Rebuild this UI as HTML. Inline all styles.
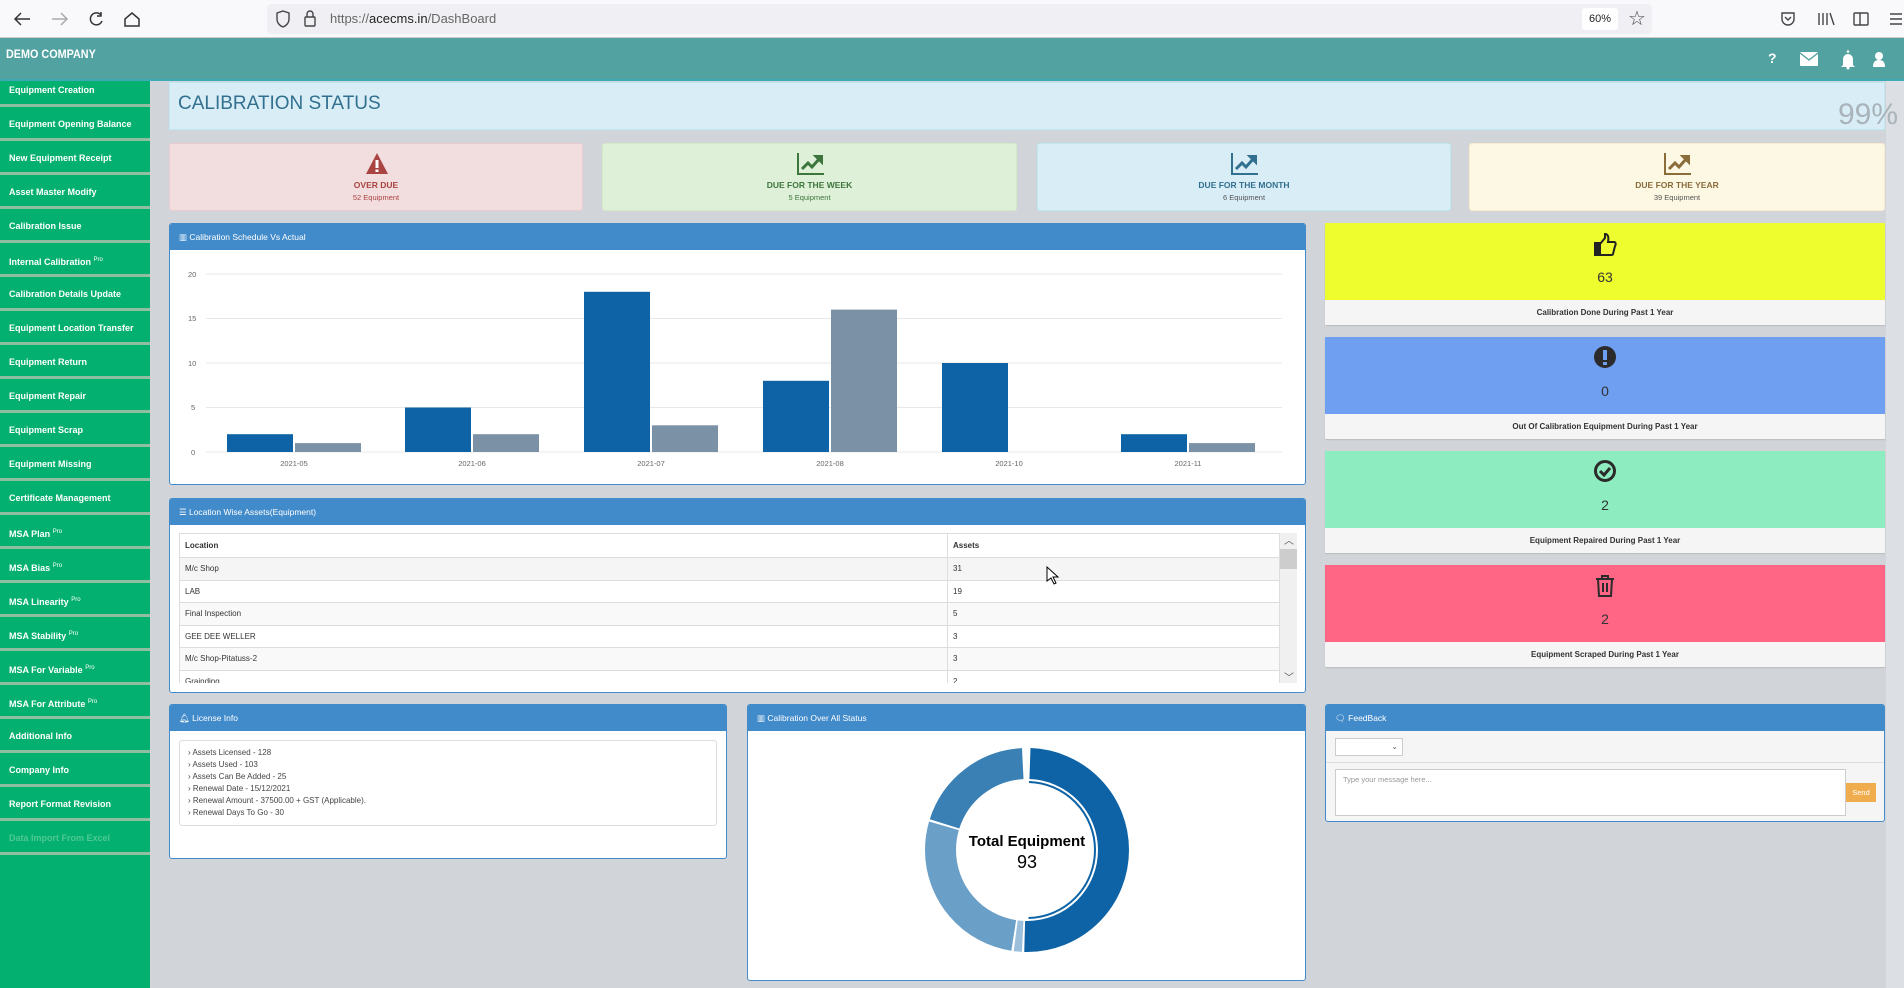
<!DOCTYPE html>
<html><head><meta charset="utf-8">
<style>
*{box-sizing:border-box;margin:0;padding:0}
body{width:1904px;height:988px;overflow:hidden;background:#d1d5da;font-family:"Liberation Sans",sans-serif;position:relative}
.a{position:absolute}
.tb{left:0;top:0;width:1904px;height:38px;background:#f9f9fb;border-bottom:1px solid #ccc}
.url{left:267px;top:4px;width:1385px;height:30px;background:#f0f0f4;border-radius:4px}
.hdr{left:0;top:38px;width:1904px;height:43px;background:#52a2a2;border-bottom:2px solid #3fa9b5}
.side{left:0;top:81px;width:150px;height:907px;background:#04b06f}
.si{position:absolute;left:0;width:150px;height:34px;border-bottom:3px solid #8fbfa0;color:#fff;font-size:9px;font-weight:bold;padding-left:9px;padding-top:4px;line-height:27px;white-space:nowrap}
.si sup{font-size:6px;font-weight:normal}
.box{position:absolute;top:143px;height:68px;border:1px solid;border-radius:3px;text-align:center}
.box .t{position:absolute;top:36px;width:100%;font-size:8.5px;font-weight:bold}
.box .s{position:absolute;top:49px;width:100%;font-size:7.5px}
.pan{position:absolute;background:#fff;border:1px solid #428bca;border-radius:3px;overflow:hidden}
.ph{height:26px;background:#428bca;color:#fff;font-size:8.5px;line-height:26px;padding-left:9px}
.card{position:absolute;left:1325px;width:560px;height:102px;background:#f5f5f5;box-shadow:0 1px 1px #bbb}
.card .c{height:77px;text-align:center;position:relative}
.card .n{position:absolute;top:46px;width:100%;font-size:14px;color:#333}
.card .f{height:25px;line-height:25px;text-align:center;font-size:8px;font-weight:bold;color:#333}
table{border-collapse:collapse;font-size:8px;color:#333}
td{border:1px solid #ddd;height:22.5px;padding-left:5px}
</style></head><body>
<div class="a tb"></div>
<svg class="a" style="left:0;top:0" width="160" height="38" fill="none" stroke="#333" stroke-width="1.5">
<path d="M30 19H15M21 13l-6 6 6 6"/><path d="M52 19h15M61 13l6 6-6 6" stroke="#aaa"/>
<path d="M101 15a6 6 0 1 0 1 6M101 12v4h-4"/><path d="M125 19l7-6 7 6v7h-14z"/></svg>
<div class="a url"></div>
<svg class="a" style="left:276px;top:8px" width="50" height="22" fill="none" stroke="#444" stroke-width="1.4"><path d="M7 3l6 2v6c0 4-3 7-6 8-3-1-6-4-6-8V5z"/><rect x="29" y="9" width="10" height="9" rx="1"/><path d="M31 9V6a3 3 0 0 1 6 0v3"/></svg>
<div class="a" style="left:330px;top:11px;font-size:13px;color:#666">https://<span style="color:#222">acecms.in</span>/DashBoard</div>
<div class="a" style="left:1582px;top:8px;width:36px;height:22px;background:#fff;border-radius:3px;font-size:11px;line-height:22px;text-align:center;color:#222">60%</div>
<div class="a" style="left:1628px;top:6px;font-size:20px;color:#444">☆</div>
<svg class="a" style="left:1770px;top:8px" width="134" height="22" fill="none" stroke="#444" stroke-width="1.4"><path d="M12 5h12v6a6 6 0 0 1-12 0z M15 9l3 3 3-3"/><path d="M49 5v12M53 5v12M57 5v12M60 5l4 12"/><rect x="84" y="5" width="14" height="12" rx="1"/><path d="M90 5v12"/><path d="M120 6h12M120 11h12M120 16h12"/></svg>
<div class="a hdr"></div>
<div class="a" style="left:6px;top:47px;color:#fff;font-size:12px;font-weight:bold;transform:scaleX(.9);transform-origin:left">DEMO COMPANY</div>
<div class="a" style="left:1768px;top:50px;color:#fff;font-size:14px;font-weight:bold">?</div>
<svg class="a" style="left:1798px;top:50px" width="92" height="20" fill="#fff"><rect x="2" y="2" width="18" height="14" rx="1"/><path d="M2 3l9 7 9-7" stroke="#52a2a2" stroke-width="1.4" fill="none"/><path d="M45 15V9a5 5 0 0 1 10 0v6l2 2H43z"/><circle cx="50" cy="18" r="1.5"/><circle cx="50" cy="1.5" r="1.3"/><circle cx="81" cy="6" r="4"/><path d="M75 17c0-5 2-7 6-7s6 2 6 7z"/></svg>
<div class="a side">
<div class="si" style="top:-8px">Equipment Creation</div>
<div class="si" style="top:26px">Equipment Opening Balance</div>
<div class="si" style="top:60px">New Equipment Receipt</div>
<div class="si" style="top:94px">Asset Master Modify</div>
<div class="si" style="top:128px">Calibration Issue</div>
<div class="si" style="top:162px">Internal Calibration <sup>Pro</sup></div>
<div class="si" style="top:196px">Calibration Details Update</div>
<div class="si" style="top:230px">Equipment Location Transfer</div>
<div class="si" style="top:264px">Equipment Return</div>
<div class="si" style="top:298px">Equipment Repair</div>
<div class="si" style="top:332px">Equipment Scrap</div>
<div class="si" style="top:366px">Equipment Missing</div>
<div class="si" style="top:400px">Certificate Management</div>
<div class="si" style="top:434px">MSA Plan <sup>Pro</sup></div>
<div class="si" style="top:468px">MSA Bias <sup>Pro</sup></div>
<div class="si" style="top:502px">MSA Linearity <sup>Pro</sup></div>
<div class="si" style="top:536px">MSA Stability <sup>Pro</sup></div>
<div class="si" style="top:570px">MSA For Variable <sup>Pro</sup></div>
<div class="si" style="top:604px">MSA For Attribute <sup>Pro</sup></div>
<div class="si" style="top:638px">Additional Info</div>
<div class="si" style="top:672px">Company Info</div>
<div class="si" style="top:706px">Report Format Revision</div>
<div class="si" style="top:740px;color:#4fc894">Data Import From Excel</div>
</div>
<div class="a" style="left:1886px;top:81px;width:18px;height:907px;background:#dcdfe3"></div>
<div class="a" style="left:169px;top:82px;width:1716px;height:48px;background:#d9edf6;border:1px solid #bce8f1"></div>
<div class="a" style="left:178px;top:93px;font-size:19px;color:#31708f">CALIBRATION STATUS</div>
<div class="a" style="left:1838px;top:98px;font-size:30px;color:#a9b4ba">99%</div>

<div class="box" style="left:169px;width:414px;background:#f2dede;border-color:#ebccd1;color:#a94442">
<svg class="a" style="left:195px;top:8px" width="24" height="24"><path d="M12 1L23 22H1z" fill="#a94442"/><rect x="10.5" y="8" width="3" height="8" fill="#fff"/><rect x="10.5" y="17.5" width="3" height="2.5" fill="#fff"/></svg>
<div class="t">OVER DUE</div><div class="s">52 Equipment</div></div>
<div class="box" style="left:602px;width:415px;background:#dff0d8;border-color:#d6e9c6;color:#3c763d">
<svg class="a" style="left:193px;top:8px" width="30" height="24" fill="none" stroke="#3c763d" stroke-width="2"><path d="M2 1v21h26"/><path d="M6 17l6-6 4 4 8-9" stroke-width="3"/><path d="M19 4h7v7z" fill="#3c763d"/></svg>
<div class="t">DUE FOR THE WEEK</div><div class="s">5 Equipment</div></div>
<div class="box" style="left:1037px;width:414px;background:#d9edf7;border-color:#bce8f1;color:#31708f">
<svg class="a" style="left:192px;top:8px" width="30" height="24" fill="none" stroke="#31708f" stroke-width="2"><path d="M2 1v21h26"/><path d="M6 17l6-6 4 4 8-9" stroke-width="3"/><path d="M19 4h7v7z" fill="#31708f"/></svg>
<div class="t">DUE FOR THE MONTH</div><div class="s" style="color:#555">6 Equipment</div></div>
<div class="box" style="left:1469px;width:416px;background:#fcf8e3;border-color:#faebcc;color:#8a6d3b">
<svg class="a" style="left:193px;top:8px" width="30" height="24" fill="none" stroke="#8a6d3b" stroke-width="2"><path d="M2 1v21h26"/><path d="M6 17l6-6 4 4 8-9" stroke-width="3"/><path d="M19 4h7v7z" fill="#8a6d3b"/></svg>
<div class="t">DUE FOR THE YEAR</div><div class="s" style="color:#555">39 Equipment</div></div>

<div class="pan" style="left:169px;top:223px;width:1137px;height:262px">
<div class="ph">▥ Calibration Schedule Vs Actual</div>
<svg class="a" style="left:0;top:26px" width="1137" height="236" font-family="Liberation Sans" font-size="7.5" fill="#666">
<g stroke="#e8e8e8"><line x1="36" x2="1112" y1="24" y2="24"/><line x1="36" x2="1112" y1="68.5" y2="68.5"/><line x1="36" x2="1112" y1="113" y2="113"/><line x1="36" x2="1112" y1="157.5" y2="157.5"/><line x1="36" x2="1112" y1="202" y2="202"/></g>
<text x="18" y="27">20</text><text x="18" y="71">15</text><text x="18" y="116">10</text><text x="21" y="160">5</text><text x="21" y="205">0</text>
<g fill="#0d63a5">
<rect x="57" y="184.2" width="66" height="17.8"/><rect x="235" y="157.5" width="66" height="44.5"/><rect x="414" y="41.8" width="66" height="160.2"/><rect x="593" y="130.8" width="66" height="71.2"/><rect x="772" y="113" width="66" height="89"/><rect x="951" y="184.2" width="66" height="17.8"/></g>
<g fill="#7b91a5">
<rect x="125" y="193.1" width="66" height="8.9"/><rect x="303" y="184.2" width="66" height="17.8"/><rect x="482" y="175.3" width="66" height="26.7"/><rect x="661" y="59.6" width="66" height="142.4"/><rect x="1019" y="193.1" width="66" height="8.9"/></g>
<g text-anchor="middle"><text x="124" y="216">2021-05</text><text x="302" y="216">2021-06</text><text x="481" y="216">2021-07</text><text x="660" y="216">2021-08</text><text x="839" y="216">2021-10</text><text x="1018" y="216">2021-11</text></g>
</svg></div>

<div class="pan" style="left:169px;top:498px;width:1137px;height:195px">
<div class="ph">☰ Location Wise Assets(Equipment)</div>
<div class="a" style="left:9px;top:34px;width:1101px;height:150px;overflow:hidden">
<table style="width:1101px">
<tr><td style="width:768px;font-weight:bold;height:24px">Location</td><td style="font-weight:bold">Assets</td></tr>
<tr style="background:#f5f5f5"><td>M/c Shop</td><td>31</td></tr>
<tr><td>LAB</td><td>19</td></tr>
<tr style="background:#f9f9f9"><td>Final Inspection</td><td>5</td></tr>
<tr><td>GEE DEE WELLER</td><td>3</td></tr>
<tr style="background:#f9f9f9"><td>M/c Shop-Pitatuss-2</td><td>3</td></tr>
<tr><td>Grainding</td><td>2</td></tr>
</table></div>
<div class="a" style="left:1110px;top:34px;width:17px;height:150px;background:#f0f0f0"><div style="margin-top:16px;height:20px;background:#cdcdcd"></div></div>
<div class="a" style="left:1114px;top:33px;font-size:10px;color:#555">︿</div>
<div class="a" style="left:1114px;top:170px;font-size:10px;color:#555">﹀</div>
</div>
<svg class="a" style="left:1046px;top:566px" width="14" height="20"><path d="M1 1v14l4-3 3 6 2-1-3-6h5z" fill="#fff" stroke="#000"/></svg>

<div class="pan" style="left:169px;top:704px;width:558px;height:155px">
<div class="ph">🔔︎ License Info</div>
<div class="a" style="left:9px;top:35px;width:538px;height:86px;border:1px solid #ddd;border-radius:3px;font-size:8px;color:#444;line-height:12px;padding:6px 0 0 8px">
› Assets Licensed - 128<br>› Assets Used - 103<br>› Assets Can Be Added - 25<br>› Renewal Date - 15/12/2021<br>› Renewal Amount - 37500.00 + GST (Applicable).<br>› Renewal Days To Go - 30</div>
</div>

<div class="pan" style="left:747px;top:704px;width:559px;height:277px">
<div class="ph">▥ Calibration Over All Status</div>
<svg class="a" style="left:0;top:0" width="559" height="277">
<g transform="rotate(-90 279 145)" fill="none" stroke-width="31">
<circle cx="279" cy="145" r="86.5" stroke="#0d63a5" stroke-dasharray="271 1000" stroke-dashoffset="-3"/>
<circle cx="279" cy="145" r="86.5" stroke="#9cc0dc" stroke-dasharray="7 1000" stroke-dashoffset="-276"/>
<circle cx="279" cy="145" r="86.5" stroke="#6a9fc8" stroke-dasharray="147 1000" stroke-dashoffset="-285"/>
<circle cx="279" cy="145" r="86.5" stroke="#3a80b5" stroke-dasharray="105 1000" stroke-dashoffset="-434"/>
<circle cx="279" cy="145" r="68" stroke="#0d63a5" stroke-width="2" stroke-dasharray="210 1000" stroke-dashoffset="-2"/>
</g>
<text x="279" y="141" text-anchor="middle" font-family="Liberation Sans" font-weight="bold" font-size="15">Total Equipment</text>
<text x="279" y="163" text-anchor="middle" font-family="Liberation Sans" font-size="18">93</text>
</svg></div>

<div class="card" style="top:223px"><div class="c" style="background:#eefd2d">
<svg class="a" style="left:268px;top:9px" width="24" height="26" fill="none" stroke="#222" stroke-width="2"><rect x="2" y="11" width="5" height="12" fill="#222"/><path d="M7 12l5-6V2c3 0 4 3 3 8h6c2 0 2 3 1 4l-2 8c0 1-1 1-2 1H7"/></svg>
<div class="n">63</div></div><div class="f">Calibration Done During Past 1 Year</div></div>
<div class="card" style="top:337px"><div class="c" style="background:#6f9ff0">
<svg class="a" style="left:269px;top:9px" width="22" height="22"><circle cx="11" cy="11" r="11" fill="#2b2b2b"/><rect x="9" y="4" width="4" height="10" fill="#6f9ff0"/><rect x="9" y="16" width="4" height="3" fill="#6f9ff0"/></svg>
<div class="n">0</div></div><div class="f">Out Of Calibration Equipment During Past 1 Year</div></div>
<div class="card" style="top:451px"><div class="c" style="background:#8eedc0">
<svg class="a" style="left:269px;top:9px" width="22" height="22" fill="none" stroke="#2b2b2b"><circle cx="11" cy="11" r="9.5" stroke-width="3"/><path d="M6 11l4 4 6-7" stroke-width="3"/></svg>
<div class="n">2</div></div><div class="f">Equipment Repaired During Past 1 Year</div></div>
<div class="card" style="top:565px"><div class="c" style="background:#ff6584">
<svg class="a" style="left:270px;top:9px" width="20" height="24" fill="none" stroke="#2b2b2b" stroke-width="2"><path d="M1 5h18M7 5V2h6v3M3 5l1 17h12l1-17M8 9v9M12 9v9"/></svg>
<div class="n">2</div></div><div class="f">Equipment Scraped During Past 1 Year</div></div>

<div class="pan" style="left:1325px;top:704px;width:560px;height:118px;background:#f5f5f5">
<div class="ph">🗨︎ FeedBack</div>
<div class="a" style="left:9px;top:33px;width:68px;height:18px;background:#fff;border:1px solid #ccc;font-size:8px;color:#666;text-align:right;padding-right:4px;line-height:16px">⌄</div>
<div class="a" style="left:0;top:57px;width:560px;height:1px;background:#ddd"></div>
<div class="a" style="left:9px;top:64px;width:511px;height:47px;background:#fff;border:1px solid #ccc;font-size:7.5px;color:#999;padding:5px 7px">Type your message here...</div>
<div class="a" style="left:520px;top:78px;width:30px;height:19px;background:#f0ad4e;color:#fff;font-size:7.5px;line-height:19px;text-align:center">Send</div>
</div>
</body></html>
